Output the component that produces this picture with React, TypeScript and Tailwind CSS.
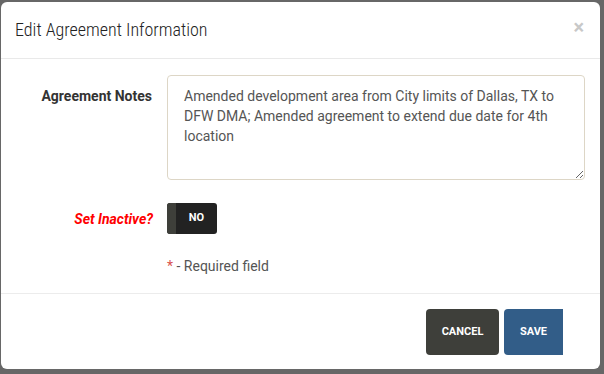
import React from "react";

export default function App() {
  return (
    <div
      className="w-[604px] h-[374px] bg-[#676767] pt-[2px] pl-[1px] pr-[4px] pb-[5px]"
      style={{ fontFamily: "Roboto, 'Liberation Sans', sans-serif" }}
    >
      <div className="w-full h-full bg-white rounded-[6px] flex flex-col overflow-hidden">
        {/* Header */}
        <div className="h-[57px] border-b border-[#e9e9e9] flex items-center justify-between pl-[14px] pr-[16px]">
          <h4 className="text-[18px] font-light text-[#222] leading-none font-stretch-condensed">Edit Agreement Information</h4>
          <span className="text-[20px] font-bold text-[#c8c8c8] leading-none -mt-[6px]">×</span>
        </div>

        {/* Body */}
        <div className="flex-1 flex flex-col pt-[16px] border-b border-[#ececec]">
          <div className="flex items-start">
            <label className="w-[151px] text-right text-[14px] font-bold text-[#333] leading-[20px] pt-[11px]">
              Agreement Notes
            </label>
            <textarea
              className="ml-[15px] w-[418px] h-[105px] border border-[#ddd6c6] rounded-[4px] px-[16px] pt-[10px] text-[14px] leading-[20px] text-[#555] resize-y outline-none"
              style={{ fontFamily: "Roboto, 'Liberation Sans', sans-serif" }}
              defaultValue="Amended development area from City limits of Dallas, TX to DFW DMA; Amended agreement to extend due date for 4th location"
            />
          </div>

          <div className="flex items-center mt-[23px]">
            <label className="w-[152px] text-right text-[14px] font-bold italic text-[#ff0000] leading-[20px]">
              Set Inactive?
            </label>
            <div className="ml-[14px] w-[50px] h-[31px] rounded-[3px] bg-[#222222] flex overflow-hidden">
              <div className="w-[9px] h-full bg-[#3e3f3a]" />
              <div className="flex-1 flex items-center justify-center text-white text-[11px] font-bold">NO</div>
            </div>
          </div>

          <div className="mt-[22px] ml-[166px] text-[14px] leading-[20px] text-[#555]">
            <span className="text-[#d9534f]">*</span> - Required field
          </div>
        </div>

        {/* Footer */}
        <div className="h-[75px] flex items-start justify-end pt-[15px] pr-[37px]">
          <button className="w-[73px] h-[46px] bg-[#3e3f3a] rounded-[4px] text-white text-[11px] font-bold uppercase">
            Cancel
          </button>
          <button className="ml-[5px] w-[59px] h-[46px] bg-[#325d88] rounded-l-[4px] text-white text-[11px] font-bold uppercase">
            Save
          </button>
        </div>
      </div>
    </div>
  );
}
